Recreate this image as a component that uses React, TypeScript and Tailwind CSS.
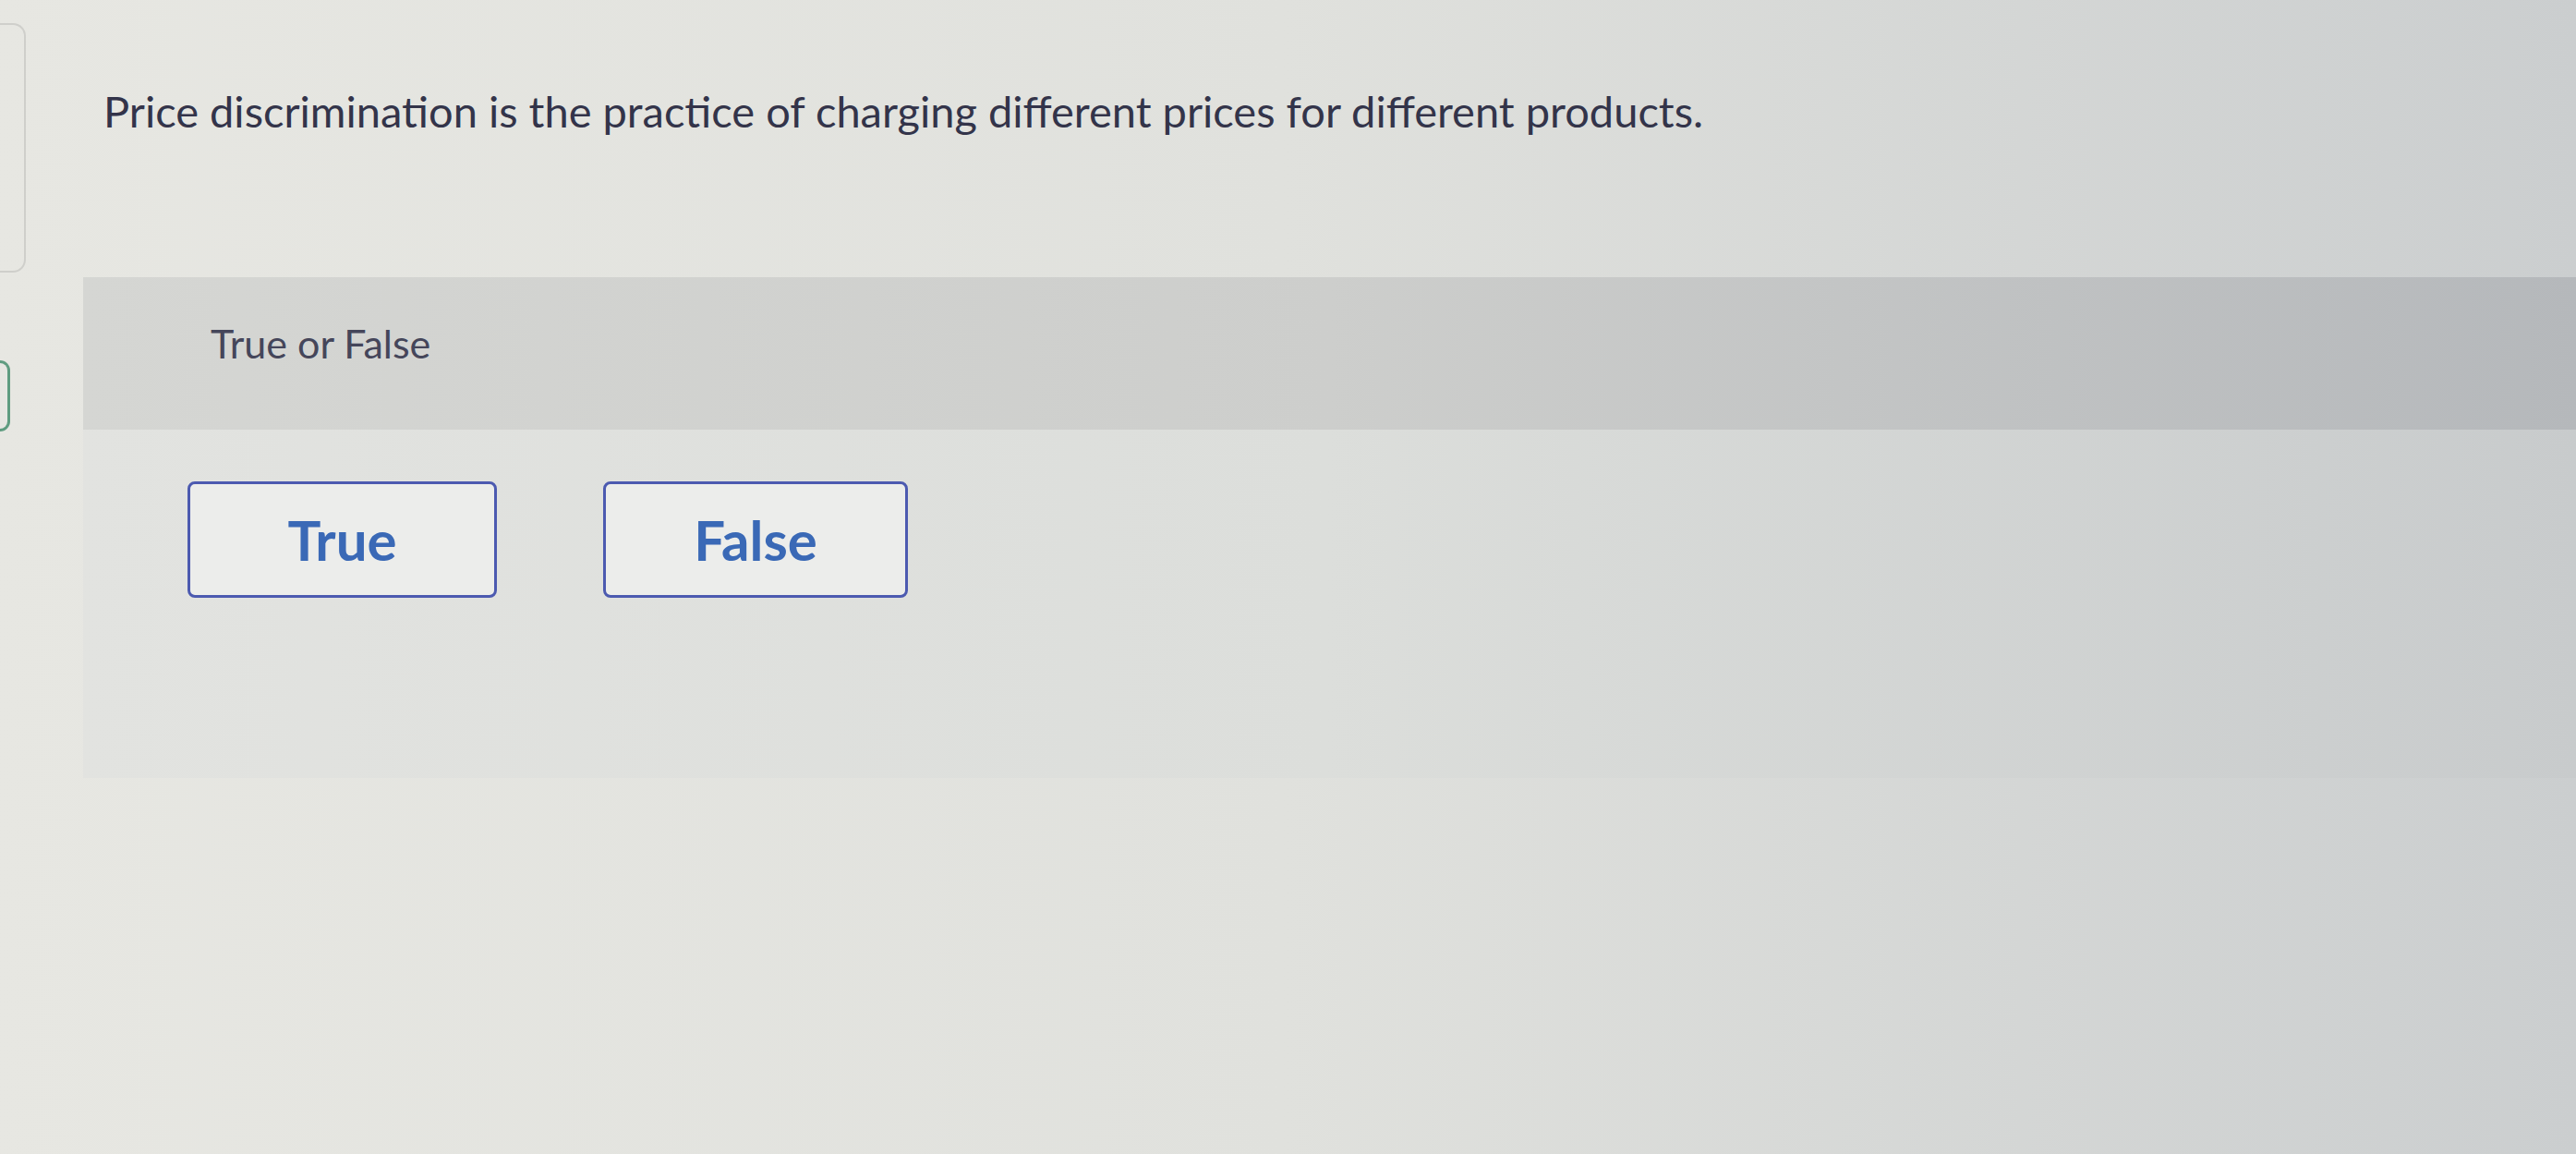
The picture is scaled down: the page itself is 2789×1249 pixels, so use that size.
import React, { useState } from "react";

const choices = ["True", "False"];

const ChoiceButton = ({
    label,
    selected,
    onPick,
    width,
}: {
    label: string;
    selected: boolean;
    onPick: (label: string) => void;
    width: string;
}) => {
    return (
        <button
            className={`${width} h-[126px] flex items-center justify-center rounded-[8px] border-[3px] border-[#4c5ab0] bg-[#ecedeb] text-[60px] font-bold text-[#3a69b6] ${selected ? "bg-[#dfe6f4]" : ""}`}
            onClick={() => onPick(label)}
        >
            {label}
        </button>
    );
};

const App = () => {
    const [answer, setAnswer] = useState<string | null>(null);

    return (
        <div className="min-h-[1249px] w-full flex bg-gradient-to-r from-[#e7e7e2] via-[#e0e1dd] to-[#cbcecf] font-['Lato','Open_Sans',sans-serif]">
            {/* left rail: edge of a card and a progress ring peeking in */}
            <aside className="w-[28px] shrink-0 flex flex-col">
                <div className="mt-[25px] h-[270px] w-[28px] rounded-r-[14px] border-[2px] border-l-0 border-[#cfcfcb]" />
                <div className="mt-[95px] h-[77px] w-[11px] rounded-r-full border-[3px] border-l-0 border-[#5f9c80]" />
            </aside>

            <main className="flex-1 flex flex-col">
                <p className="pl-[84px] pt-[92px] text-[47px] leading-[56px] text-[#33344a]">
                    Price discrimination is the practice of charging different prices for different products.
                </p>

                <section className="ml-[62px] mt-[152px] flex flex-col">
                    <div className="h-[165px] pl-[138px] pt-[46px] bg-gradient-to-r from-[#d5d6d3] via-[#cdcecc] to-[#b5b8bb]">
                        <span className="text-[43px] leading-[52px] text-[#45465a]">True or False</span>
                    </div>
                    <div className="pl-[113px] pt-[56px] pb-[195px] flex gap-[115px] bg-gradient-to-r from-[#e2e3e0] via-[#dcdedb] to-[#c8cbcc]">
                        <ChoiceButton label={choices[0]} selected={answer === choices[0]} onPick={setAnswer} width="w-[335px]" />
                        <ChoiceButton label={choices[1]} selected={answer === choices[1]} onPick={setAnswer} width="w-[330px]" />
                    </div>
                </section>
            </main>
        </div>
    );
};

export default App;
